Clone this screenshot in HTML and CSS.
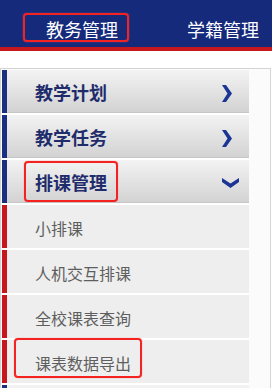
FILE: index.html
```html
<!DOCTYPE html>
<html lang="zh-CN">
<head>
  <meta charset="UTF-8" />
  <meta name="viewport" content="width=device-width, initial-scale=1.0"/>
  <title>教务管理</title>
  <link rel="stylesheet" href="styles.css">
</head>
<body>

<div class="topbar">
  <a class="nav-item">教务管理<span class="mark mark-nav"></span></a>
  <a class="nav-item">学籍管理</a>
</div>

<div class="sidebar">
  <div class="menu-head">
    <span>教学计划</span>
    <svg class="arrow-right" width="11" height="17" viewBox="0 0 11 17"><path d="M1 0 L5 0 L11 8.5 L5 17 L1 17 L6.5 8.5 Z"/></svg>
  </div>
  <div class="menu-head">
    <span>教学任务</span>
    <svg class="arrow-right" width="11" height="17" viewBox="0 0 11 17"><path d="M1 0 L5 0 L11 8.5 L5 17 L1 17 L6.5 8.5 Z"/></svg>
  </div>
  <div class="menu-head open">
    <span>排课管理</span>
    <svg class="arrow-down" width="17" height="10" viewBox="0 0 17 10"><path d="M0 0 L8.5 5.5 L17 0 L17 4 L8.5 10 L0 4 Z"/></svg>
    <span class="mark mark-head"></span>
  </div>
  <div class="menu-sub">小排课</div>
  <div class="menu-sub">人机交互排课</div>
  <div class="menu-sub">全校课表查询</div>
  <div class="menu-sub">课表数据导出<span class="mark mark-sub"></span></div>
  <!-- next group, only its top edge is visible -->
  <div class="menu-head"></div>
</div>

</body>
</html>
```

FILE: styles.css
```css
* { box-sizing: border-box; }

body {
  margin: 0;
  font-family: "Noto Sans CJK SC", "Noto Sans", sans-serif;
  background: #fff;
  overflow: hidden;
}

.topbar {
  display: flex;
  gap: 69px;
  height: 51px;
  padding: 18px 0 0 46px;
  background: #162a7c;
  border-bottom: 4px solid #c6171e;
}

.nav-item {
  position: relative;
  color: #fff;
  font-size: 18px;
  line-height: 22px;
  height: 22px;
  white-space: nowrap;
}

.mark {
  position: absolute;
  border: 2px solid #f52222;
  border-radius: 4px;
  box-shadow: 0 0 1px #ff6a6a;
  pointer-events: none;
}

.mark-nav {
  left: -23px;
  right: -11px;
  top: -5px;
  bottom: -2px;
}

.sidebar {
  margin-top: 17px;
  width: 271px;
  height: 330px;
  padding: 1px 21px 0 1px;
  border: 1px solid #d4d4d4;
  border-bottom: none;
  background: #fbfbfb;
}

.menu-head,
.menu-sub {
  position: relative;
  display: flex;
  align-items: center;
  height: 45px;
  padding-left: 33px;
  border-bottom: 2px solid #fff;
  white-space: nowrap;
}

.menu-head {
  justify-content: space-between;
  padding-right: 17px;
  background: linear-gradient(#f3f3f3, #d2d2d2);
  box-shadow: inset 5px 0 #1a2f80, inset 0 -1px #c6c6c6;
  color: #1f2c6c;
  font-size: 18px;
  font-weight: bold;
}

.menu-head svg {
  fill: #1c3494;
  margin-top: 3px;
}

.menu-head.open {
  padding-right: 10px;
}

.menu-sub {
  padding-top: 3px;
  background: #eeeeee;
  box-shadow: inset 5px 0 #c8161d;
  color: #5e5e5e;
  font-size: 16px;
}

.mark-head {
  left: 22px;
  top: 1px;
  width: 94px;
  height: 41px;
}

.mark-sub {
  left: 12px;
  top: -2px;
  width: 128px;
  height: 40px;
}
```
